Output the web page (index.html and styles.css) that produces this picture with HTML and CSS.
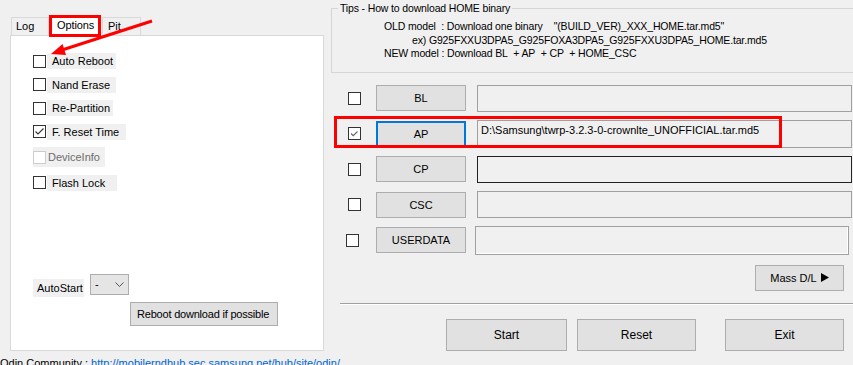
FILE: index.html
```html
<!DOCTYPE html>
<html>
<head>
<meta charset="utf-8">
<link rel="stylesheet" href="styles.css">
</head>
<body>
<div class="app">
  <div class="left">
    <div class="tabs">
      <div class="tab tab-log">Log</div>
      <div class="tab tab-active">Options</div>
      <div class="tab tab-pit">Pit</div>
    </div>
    <div class="panel">
      <div class="opts">
        <div class="opt"><span class="cb"></span><span class="lbl w-ar">Auto Reboot</span></div>
        <div class="opt"><span class="cb"></span><span class="lbl w-ne">Nand Erase</span></div>
        <div class="opt"><span class="cb"></span><span class="lbl w-rp">Re-Partition</span></div>
        <div class="opt"><span class="cb"><svg width="11" height="11" viewBox="0 0 11 11"><polyline points="1.5,5.5 4,8 9.5,2.5" fill="none" stroke="#333" stroke-width="1.1"/></svg></span><span class="lbl w-fr">F. Reset Time</span></div>
        <div class="opt opt-dis"><span class="cb cb-dis"></span><span class="lbl-dis">DeviceInfo</span></div>
        <div class="opt"><span class="cb"></span><span class="lbl w-fl">Flash Lock</span></div>
      </div>
      <div class="autostart">
        <span class="as-lbl">AutoStart</span>
        <div class="select"><span>-</span><svg class="chev" width="9" height="5" viewBox="0 0 9 5"><polyline points="0.5,0.5 4.5,4.5 8.5,0.5" fill="none" stroke="#555" stroke-width="1"/></svg></div>
      </div>
      <div class="btn reboot">Reboot download if possible</div>
    </div>
  </div>
  <div class="right">
    <fieldset class="tips">
      <legend>Tips - How to download HOME binary</legend>
      <div class="tips-body">
        <div>OLD model&nbsp; : Download one binary&nbsp;&nbsp;&nbsp; "(BUILD_VER)_XXX_HOME.tar.md5"</div>
        <div class="ex">ex) G925FXXU3DPA5_G925FOXA3DPA5_G925FXXU3DPA5_HOME.tar.md5</div>
        <div>NEW model : Download BL&nbsp; + AP&nbsp; + CP&nbsp; + HOME_CSC</div>
      </div>
    </fieldset>
    <div class="files">
      <div class="row"><span class="cb"></span><div class="btn fbtn">BL</div><div class="field"></div></div>
      <div class="row row-ap"><span class="cb cb-ap"><svg width="11" height="11" viewBox="0 0 11 11"><polyline points="2,5.5 4.2,7.7 8.5,3.5" fill="none" stroke="#666" stroke-width="1.1"/></svg></span><div class="btn fbtn fbtn-focus">AP</div><div class="field field-ap">D:\Samsung\twrp-3.2.3-0-crownlte_UNOFFICIAL.tar.md5</div></div>
      <div class="row"><span class="cb"></span><div class="btn fbtn">CP</div><div class="field field-dark"></div></div>
      <div class="row"><span class="cb"></span><div class="btn fbtn">CSC</div><div class="field"></div></div>
      <div class="row row-ud"><span class="cb"></span><div class="btn fbtn">USERDATA</div><div class="field field-ud"></div></div>
      <div class="annot"></div>
    </div>
    <div class="mass-row"><div class="btn mass">Mass D/L <svg width="8" height="9" viewBox="0 0 8 9"><polygon points="0,0 8,4.5 0,9" fill="#000"/></svg></div></div>
    <div class="sep"></div>
    <div class="actions">
      <div class="btn act act-start">Start</div>
      <div class="btn act act-reset">Reset</div>
      <div class="btn act act-exit">Exit</div>
    </div>
  </div>
</div>
<div class="footer">Odin Community : <span class="link">http://mobilerndhub.sec.samsung.net/hub/site/odin/</span></div>
<svg class="arrow" width="853" height="365" viewBox="0 0 853 365">
  <line x1="152" y1="21" x2="62" y2="50" stroke="#f00" stroke-width="3"/>
  <polygon points="51,54 62.6,44 66,55" fill="#f00"/>
</svg>
</body>
</html>
```
FILE: styles.css
```css
* { box-sizing: border-box; }
html, body { margin: 0; padding: 0; }
body {
  width: 853px;
  height: 365px;
  overflow: hidden;
  position: relative;
  background: #f0f0f0;
  font-family: "Liberation Sans", Arial, sans-serif;
  font-size: 11px;
  color: #000;
}
.app { display: flex; height: 356px; }

/* left */
.left { width: 331px; flex: none; padding: 15px 0 0 10px; }
.tabs { display: flex; align-items: flex-end; height: 20px; margin-left: 1px; position: relative; z-index: 1; }
.tab {
  height: 18px;
  border: 1px solid #d9d9d9;
  border-bottom: none;
  background: #f0f0f0;
  line-height: 17px;
  white-space: nowrap;
}
.tab-log { width: 38px; padding-left: 4px; }
.tab-active {
  width: 52px;
  height: 22px;
  margin-bottom: -2px;
  border: 3px solid #f00;
  background: #fff;
  padding-left: 5px;
  line-height: 15px;
  letter-spacing: -0.1px;
}
.tab-pit { width: 39px; margin-left: 1px; padding-left: 5px; }
.panel {
  width: 314px;
  height: 316px;
  background: #fff;
  border: 1px solid #d9d9d9;
  padding: 17px 0 0 22px;
}
.opts { display: flex; flex-direction: column; gap: 7.5px; }
.opt { display: flex; align-items: center; height: 16px; white-space: nowrap; }
.cb {
  width: 13px; height: 13px;
  border: 1px solid #333;
  background: #fff;
  flex: none;
  display: flex; align-items: center; justify-content: center;
}
.lbl { background: #f0f0f0; height: 16px; line-height: 16px; padding-left: 5px; margin-left: 1px; white-space: nowrap; flex: none; }
.w-ar, .w-ne { width: 69px; }
.w-rp { width: 66px; }
.w-fr { width: 79px; }
.w-fl { width: 70px; }
.opt-dis { height: 20px; width: 72px; background: #f0f0f0; }
.cb-dis { border-color: #cccccc; }
.lbl-dis { color: #6d6d6d; padding-left: 2px; }
.autostart { display: flex; align-items: flex-start; margin-top: 83px; }
.as-lbl { background: #f0f0f0; width: 51px; height: 18px; line-height: 18px; padding-left: 4px; margin-top: 5px; }
.select {
  margin-left: 6px;
  width: 39px; height: 21px;
  border: 1px solid #adadad;
  background: #e5e5e5;
  display: flex; align-items: center; justify-content: space-between;
  padding: 0 4px 0 4px;
}
.chev { margin-top: 1px; }
.btn {
  background: #e1e1e1;
  border: 1px solid #adadad;
  white-space: nowrap;
}
.reboot {
  margin: 5px 0 0 97px;
  width: 148px; height: 24px;
  line-height: 22px;
  padding-left: 6px;
  font-size: 11px;
  letter-spacing: -0.2px;
}

/* right */
.right { flex: 1; padding-top: 2px; min-width: 0; }
.tips {
  margin: 0;
  padding: 0;
  width: 540px;
  border: 1px solid #d5d5d5;
  min-width: 0;
  font-size: 10.5px;
  letter-spacing: -0.15px;
}
.tips legend { padding: 0 2px; margin-left: 6px; line-height: 13px; }
.tips-body { padding: 5px 0 11px 52px; line-height: 13.5px; white-space: nowrap; }
.tips-body .ex { padding-left: 28px; }
.files { position: relative; display: flex; flex-direction: column; gap: 8.5px; margin-top: 12px; }
.row { display: flex; align-items: center; height: 27px; }
.row .cb { margin-left: 17px; }
.row-ud .cb { margin-left: 15px; }
.fbtn {
  margin-left: 15px;
  width: 90px; height: 26px;
  display: flex; align-items: center; justify-content: center;
}
.row-ud .fbtn { margin-left: 17px; }
.fbtn-focus { border: 2px solid #0078d7; }
.cb-ap { border-color: #333; }
.field {
  margin-left: 11px;
  width: 375px; height: 27px;
  border: 1px solid #a0a0a0;
  background: #f0f0f0;
  padding: 3px 3px;
  line-height: 13px;
  white-space: nowrap;
}
.field-ap { height: 28px; }
.field-dark { border-color: #222; }
.field-ud { margin-left: 9px; width: 374px; height: 29px; box-shadow: inset -1px -1px 0 #fff; }
.annot {
  position: absolute;
  left: 3px; top: 31px;
  width: 448px; height: 32px;
  border: 3px solid #f00;
}
.mass-row { display: flex; justify-content: flex-end; margin-top: 11px; padding-right: 9px; }
.mass {
  width: 89px; height: 26px;
  display: flex; align-items: center; justify-content: center; gap: 4px;
}
.sep { margin: 12px 0 0 9px; height: 2px; border-top: 1px solid #a0a0a0; border-bottom: 1px solid #fff; }
.actions { display: flex; margin-top: 14px; padding-left: 115px; }
.act {
  height: 32px;
  display: flex; align-items: center; justify-content: center;
  font-size: 12px;
}
.act-start { width: 121px; }
.act-reset { width: 119px; margin-left: 10px; }
.act-exit { width: 119px; margin-left: 29px; }

.footer { line-height: 14px; white-space: nowrap; }
.link { color: #0066cc; }
.arrow { position: absolute; left: 0; top: 0; pointer-events: none; z-index: 5; }
```
